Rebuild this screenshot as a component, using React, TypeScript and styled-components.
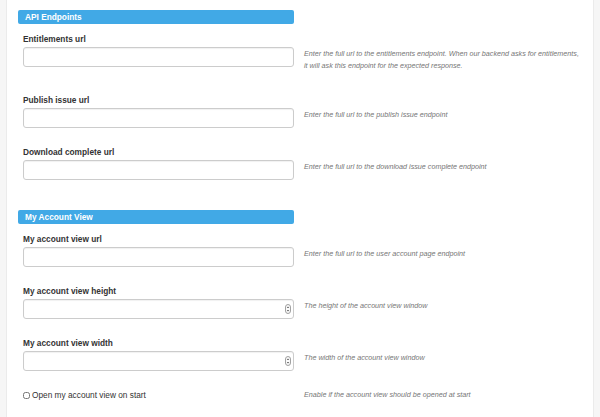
import React from "react"
import styled, { createGlobalStyle } from "styled-components"

const GlobalStyle = createGlobalStyle`
  html, body {
    margin: 0;
    padding: 0;
    background: #f6f6f6;
    font-family: "Liberation Sans", Arial, sans-serif;
  }
`

const Panel = styled.div`
  margin: 0 6px;
  min-height: 417px;
  box-sizing: border-box;
  background: #ffffff;
  border-left: 1px solid #ebebeb;
  border-right: 1px solid #ebebeb;
  padding: 10px 0 0 11px;
`

const Section = styled.section`
  display: flex;
  flex-direction: column;
  margin-bottom: 12px;
`

const SectionHeader = styled.div`
  width: 276px;
  height: 14px;
  box-sizing: border-box;
  background: #41a9e6;
  border-radius: 2px;
  color: #ffffff;
  font-weight: bold;
  font-size: 8.3px;
  line-height: 14px;
  padding-left: 7px;
  margin-bottom: 9px;
`

const Row = styled.div`
  display: grid;
  grid-template-columns: 271px 1fr;
  column-gap: 10px;
  padding-left: 5px;
  margin-bottom: 18px;
`

const Field = styled.div`
  display: flex;
  flex-direction: column;
`

const Label = styled.label`
  font-size: 8.3px;
  font-weight: bold;
  color: #333333;
  line-height: 12px;
  margin-bottom: 2px;
`

const InputWrap = styled.div`
  position: relative;
`

const TextInput = styled.input`
  display: block;
  width: 100%;
  height: 20px;
  box-sizing: border-box;
  border: 1px solid #cccccc;
  border-radius: 3px;
  box-shadow: inset 0 1px 1px rgba(0, 0, 0, 0.06);
  background: #ffffff;
  font-family: inherit;
  font-size: 8px;
  padding: 0 6px;
  outline: none;
  appearance: textfield;
  -moz-appearance: textfield;
  &::-webkit-inner-spin-button,
  &::-webkit-outer-spin-button {
    -webkit-appearance: none;
    margin: 0;
  }
`

const Spinner = styled.svg`
  position: absolute;
  right: 3px;
  top: 5px;
  width: 6px;
  height: 10px;
`

const Help = styled.p<{ $top?: number }>`
  margin: 0 0 4px;
  padding-top: ${(p) => p.$top ?? 15}px;
  font-size: 7.2px;
  font-style: italic;
  line-height: 12px;
  color: #767676;
`

const CheckLabel = styled.label`
  display: flex;
  align-items: center;
  gap: 2px;
  font-size: 8.3px;
  color: #333333;
  line-height: 12px;
  height: 12px;
`

const Check = styled.input`
  width: 7px;
  height: 7px;
  margin: 0;
  accent-color: #888;
`

const SpinIcon = () => (
  <Spinner viewBox="0 0 6 10">
    <rect x="0.5" y="0.5" width="5" height="9" rx="2.5" fill="#fafafa" stroke="#8a8a8a" strokeWidth="0.8" />
    <path d="M1.8 4 L3 2.6 L4.2 4 Z" fill="#555" />
    <path d="M1.8 6 L3 7.4 L4.2 6 Z" fill="#555" />
  </Spinner>
)

type FieldRow = {
  label: string
  help: string[]
  number?: boolean
}

const apiRows: FieldRow[] = [
  {
    label: "Entitlements url",
    help: [
      "Enter the full url to the entitlements endpoint. When our backend asks for entitlements,",
      "it will ask this endpoint for the expected response.",
    ],
  },
  { label: "Publish issue url", help: ["Enter the full url to the publish issue endpoint"] },
  { label: "Download complete url", help: ["Enter the full url to the download issue complete endpoint"] },
]

const accountRows: FieldRow[] = [
  { label: "My account view url", help: ["Enter the full url to the user account page endpoint"] },
  { label: "My account view height", help: ["The height of the account view window"], number: true },
  { label: "My account view width", help: ["The width of the account view window"], number: true },
]

const FormRow = ({ row }: { row: FieldRow }) => (
  <Row>
    <Field>
      <Label>{row.label}</Label>
      <InputWrap>
        <TextInput type={row.number ? "number" : "text"} />
        {row.number && <SpinIcon />}
      </InputWrap>
    </Field>
    <Help>
      {row.help.map((line, i) => (
        <React.Fragment key={i}>
          {line}
          {i < row.help.length - 1 && <br />}
        </React.Fragment>
      ))}
    </Help>
  </Row>
)

export default function App() {
  return (
    <>
      <GlobalStyle />
      <Panel>
        <Section>
          <SectionHeader>API Endpoints</SectionHeader>
          {apiRows.map((row) => (
            <FormRow key={row.label} row={row} />
          ))}
        </Section>
        <Section>
          <SectionHeader>My Account View</SectionHeader>
          {accountRows.map((row) => (
            <FormRow key={row.label} row={row} />
          ))}
          <Row>
            <CheckLabel>
              <Check type="checkbox" />
              Open my account view on start
            </CheckLabel>
            <Help $top={0}>Enable if the account view should be opened at start</Help>
          </Row>
        </Section>
      </Panel>
    </>
  )
}
